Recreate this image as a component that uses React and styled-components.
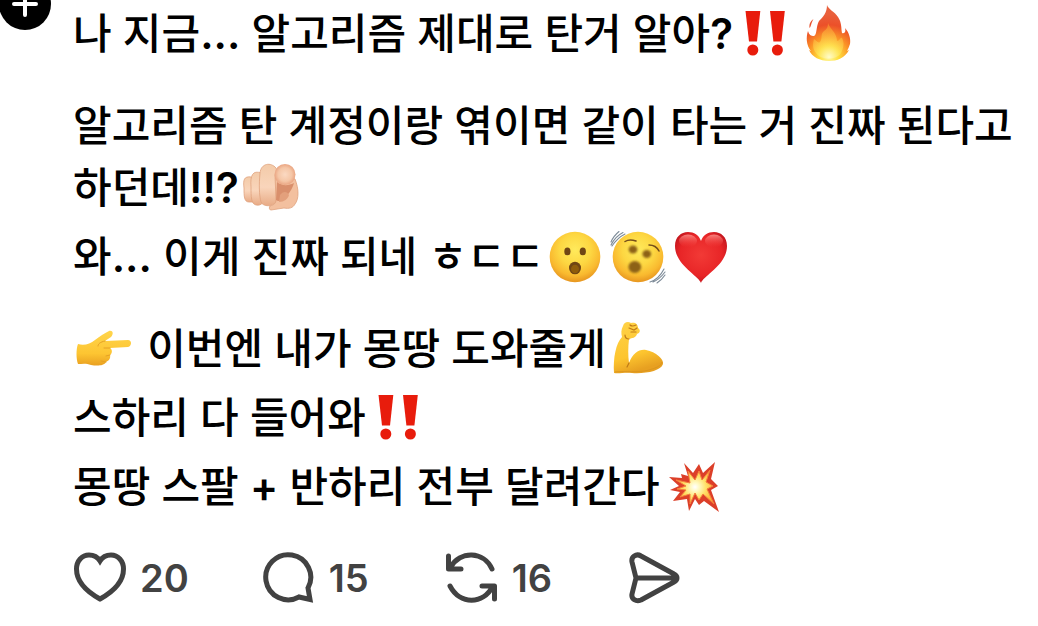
import React from "react";
import styled, { createGlobalStyle } from "styled-components";

const GlobalStyle = createGlobalStyle`
  * { box-sizing: border-box; }
  body {
    margin: 0;
    background: #fff;
    color: #000;
    overflow-x: hidden;
    font-family: Inter, "Noto Sans CJK KR", sans-serif;
  }
`;

const Post = styled.article`
  display: grid;
  grid-template-columns: 73px minmax(0, 1fr);
`;

const FollowButton = styled.button`
  display: grid;
  place-items: center;
  width: 52px;
  height: 52px;
  margin: -22px 0 0 -1px;
  padding: 0;
  border: 0;
  border-radius: 50%;
  background: #000;
  color: #fff;
`;

const Content = styled.div`
  padding: 3px 12px 20px 0;
`;

const Body = styled.div`
  display: flex;
  flex-direction: column;
  gap: 30px;
  font-size: 42px;
  line-height: 62px;
  font-weight: 500;
  word-break: keep-all;
`;

const Group = styled.div`
  display: flex;
  flex-direction: column;
  gap: 7px;
`;

const Line = styled.p`
  margin: 0;
`;

const Phrase = styled.span`
  white-space: nowrap;
`;

const Mark = styled.span`
  font-weight: 600;
`;

const Emoji = styled.svg`
  width: 63px;
  height: 62px;
  vertical-align: top;
`;

const Actions = styled.div`
  display: flex;
  align-items: center;
  gap: 74px;
  margin-top: 32px;
  padding-left: 1px;
`;

const ActionButton = styled.button`
  display: flex;
  align-items: center;
  gap: 14px;
  height: 56px;
  padding: 0;
  border: 0;
  background: none;
  color: #424242;
  font: 600 38px/56px Inter, sans-serif;
`;

const Count = styled.span`
  min-width: 43px;
  text-align: left;
`;

const ActionIcon = styled.svg`
  width: 52px;
  height: 52px;
  fill: none;
  stroke: currentColor;
  stroke-width: 5;
  stroke-linecap: round;
  stroke-linejoin: round;
`;

function DoubleBang() {
  return (
    <Emoji viewBox="0 0 63 62" role="img" aria-label="느낌표 두 개" fill="#e81c0c">
      <path d="M12.5 8H27.3L24 38.5H16Z" />
      <circle cx="19.8" cy="47" r="5.5" />
      <path d="M37 8H51.8L48.4 38.5H40.4Z" />
      <circle cx="44.4" cy="47" r="5.5" />
    </Emoji>
  );
}

function Fire() {
  return (
    <Emoji viewBox="0 0 63 62" role="img" aria-label="불">
      <defs>
        <radialGradient id="fire" gradientUnits="userSpaceOnUse" cx="33" cy="54" r="43">
          <stop offset="0" stopColor="#fff9a8" />
          <stop offset=".22" stopColor="#ffdf3d" />
          <stop offset=".48" stopColor="#fb9326" />
          <stop offset=".75" stopColor="#ec5029" />
          <stop offset="1" stopColor="#e9603c" />
        </radialGradient>
        <radialGradient id="fireCore" gradientUnits="userSpaceOnUse" cx="33" cy="54" r="30">
          <stop offset="0" stopColor="#fffde0" />
          <stop offset=".4" stopColor="#ffe85c" />
          <stop offset="1" stopColor="#fba233" />
        </radialGradient>
      </defs>
      <path d="M31 2C32 6 39 9 42 14C46 20 45 25 46 30C49 31 50 28 49 25C53 29 55 36 54 41C53 44 52 46 51 48L53 47C49 55 41 58 33 58C24 58 16 54 13 47L15 48C10 42 10 34 12 28C13 32 15 33 18 33C21 32 20 23 23 18C27 14 31 10 31 2Z" fill="url(#fire)" />
      <path d="M17.5 16C15 18 13 20 13.5 25C15 24 15 20 17.5 16Z" fill="#e9522e" />
      <path d="M32 20C34 26 41 30 41 38C44 38 44 34 46 35C49 40 47 46 45 50C41 57 25 58 20 50C16 45 17 40 18 36C20 37 22 41 24 39C27 35 24 31 28 28C31 26 32 24 32 20Z" fill="url(#fireCore)" opacity=".6" />
    </Emoji>
  );
}

function PointAtYou() {
  return (
    <Emoji viewBox="0 0 63 62" role="img" aria-label="당신을 가리키는 손">
      <defs>
        <linearGradient id="skin" x1="0" y1="0" x2="0" y2="1">
          <stop offset="0" stopColor="#f3cba9" />
          <stop offset=".55" stopColor="#f9d5bb" />
          <stop offset="1" stopColor="#e8ab86" />
        </linearGradient>
        <radialGradient id="knuckle">
          <stop offset="0" stopColor="#fbd9c2" />
          <stop offset=".65" stopColor="#f5c6a6" />
          <stop offset="1" stopColor="#eaa582" />
        </radialGradient>
      </defs>
      <g fill="url(#skin)" stroke="#dfa27d" strokeWidth=".8">
        <path d="M12 20C5 19 4 23 5 31C5 39 5 45 10 45H16V22Z" />
        <path d="M22 16C14 13 11 18 12 30C12 39 12 47 17 48C23 49 25 45 25 39V20Z" />
        <path d="M37 11C32 5 22 6 21 16C20 27 20 38 22 45C24 50 34 50 37 45L41 22Z" />
        <path d="M36 18L56 22C60 32 60 42 56 47C54 51 50 52 45 51L32 53C30 53 30 50 31 49C35 48 37 46 37 43Z" fill="#f3c09f" />
      </g>
      <path d="M38 25C43 29 49 29 55 26C53 33 50 36 46 41C43 44 39 45 37 43Z" fill="#d98f6c" />
      <path d="M41 38C44 34 48 34 50 38C49 42 45 45 40 45Z" fill="#e3a07c" />
      <circle cx="46" cy="17.5" r="10.5" fill="url(#knuckle)" />
    </Emoji>
  );
}

function FaceGradient({ id }) {
  return (
    <radialGradient id={id} cx="50%" cy="36%" r="62%">
      <stop offset="0" stopColor="#ffea5c" />
      <stop offset=".5" stopColor="#fdd742" />
      <stop offset=".82" stopColor="#f9b92f" />
      <stop offset="1" stopColor="#e99a22" />
    </radialGradient>
  );
}

function OpenMouth() {
  return (
    <Emoji viewBox="0 0 63 62" role="img" aria-label="놀란 얼굴">
      <defs><FaceGradient id="faceStill" /></defs>
      <circle cx="31" cy="31" r="25.3" fill="url(#faceStill)" />
      <g fill="#704514">
        <ellipse cx="23.4" cy="25.4" rx="3.1" ry="3.9" />
        <ellipse cx="38.8" cy="25.4" rx="3.1" ry="3.9" />
        <ellipse cx="31" cy="42" rx="6" ry="6.3" />
      </g>
      <ellipse cx="31" cy="43" rx="4" ry="4.3" fill="#8f5c0b" />
    </Emoji>
  );
}

function ShakingFace() {
  return (
    <Emoji viewBox="0 0 63 62" role="img" aria-label="흔들리는 얼굴">
      <defs>
        <FaceGradient id="faceShake" />
        <filter id="shake"><feGaussianBlur stdDeviation=".8" /></filter>
      </defs>
      <circle cx="31" cy="31" r="25.3" fill="url(#faceShake)" />
      <g fill="#8d6215" filter="url(#shake)">
        <ellipse cx="26" cy="23.5" rx="4.4" ry="4" />
        <ellipse cx="39.8" cy="28" rx="4.4" ry="4" />
        <ellipse cx="27.8" cy="41" rx="6.4" ry="6" />
      </g>
      <g fill="none" strokeLinecap="round">
        <path d="M18 15.5C21 13.5 25 13.5 29 15M42 19C46 19 50 21 52 25" stroke="#754e1a" strokeWidth="1.5" />
        <path d="M4 16C6 11 9 8 12 5.5M4 19C7 13 11 9 16 6.5M5 20C9 14 12 11 18 8M43 56C49 54 54 49 57 43M46 56C51 54 55 50 58 46M50 57C53 55 56 52 58 49" stroke="#7d8b98" strokeWidth="1.1" />
      </g>
    </Emoji>
  );
}

function RedHeart() {
  return (
    <Emoji viewBox="0 0 63 62" role="img" aria-label="빨간 하트">
      <defs>
        <radialGradient id="heart" cx="50%" cy="45%" r="58%">
          <stop offset="0" stopColor="#f23a36" />
          <stop offset=".7" stopColor="#e82527" />
          <stop offset="1" stopColor="#c2161e" />
        </radialGradient>
        <linearGradient id="shine" x1="0" y1="0" x2="0" y2="1">
          <stop offset="0" stopColor="#ff9a94" stopOpacity=".8" />
          <stop offset="1" stopColor="#f5403c" stopOpacity="0" />
        </linearGradient>
      </defs>
      <path d="M31 57C29 50 5 39 5 20C5 11 11 6 18 6C24 6 29 9 31 15C33 9 38 6 44 6C51 6 57 11 57 20C57 39 33 50 31 57Z" fill="url(#heart)" />
      <ellipse cx="18" cy="15" rx="9" ry="6.5" fill="url(#shine)" />
      <ellipse cx="44" cy="15" rx="9" ry="6.5" fill="url(#shine)" />
    </Emoji>
  );
}

function PointRight() {
  return (
    <Emoji viewBox="0 0 63 62" role="img" aria-label="오른쪽을 가리키는 손">
      <defs>
        <linearGradient id="handRight" x1="0" y1="0" x2="0" y2="1">
          <stop offset="0" stopColor="#ffd54c" />
          <stop offset=".65" stopColor="#fdc532" />
          <stop offset="1" stopColor="#e9a021" />
        </linearGradient>
      </defs>
      <path d="M5 26C11 28 17 26 22 22C27 18 32 15 36 13C40 12 41 16 38 19L32 23L55 22C59 22 59 28 55 29L37 30C40 32 39 36 37 37C38 41 35 43 33 44C31 48 24 48 18 47C13 45 9 46 5 46C3 41 3 31 5 26Z" fill="url(#handRight)" />
      <path d="M32 23C27 24 25 26 25 28M37 30H31M37 37L33 38M33 44L28 43" fill="none" stroke="#e5a024" strokeWidth="1" strokeLinecap="round" />
    </Emoji>
  );
}

function Biceps() {
  return (
    <Emoji viewBox="0 0 63 62" role="img" aria-label="알통">
      <defs>
        <linearGradient id="arm" x1="0" y1="0" x2=".3" y2="1">
          <stop offset="0" stopColor="#ffd348" />
          <stop offset=".7" stopColor="#fdc52f" />
          <stop offset="1" stopColor="#e7a021" />
        </linearGradient>
      </defs>
      <path d="M17 8C18 4 22 3 25 5C29 4 32 6 32 10C35 12 34 15 31 16C30 20 26 20 23 21C22 29 22 38 23 45C27 35 33 31 40 32C50 34 58 41 57 46C55 53 39 56 26 55C19 54 13 56 8 55C7 40 10 25 16 19C15 15 15 12 17 8Z" fill="url(#arm)" />
      <path d="M23 45L21 49M23 21C20 21 19 19 19 17M24 7C26 9 28 8 30 7M23 10L28 12L31 10M25 14L30 14" fill="none" stroke="#bf7a17" strokeWidth="1.2" strokeLinecap="round" />
      <path d="M9 54C19 53 32 55 43 52C50 50 55 48 56 44" fill="none" stroke="#dc951e" strokeWidth="1" />
    </Emoji>
  );
}

function Boom() {
  return (
    <Emoji viewBox="0 0 63 62" role="img" aria-label="폭발">
      <defs>
        <radialGradient id="boom" gradientUnits="userSpaceOnUse" cx="35" cy="31" r="20">
          <stop offset="0" stopColor="#fff" />
          <stop offset=".22" stopColor="#fff9c2" />
          <stop offset=".55" stopColor="#ffe169" />
          <stop offset="1" stopColor="#fcae34" />
        </radialGradient>
      </defs>
      <path d="M24 7L33 17L39 8L43 17L55 6L51 23L58 30L51 34L59 56L44 45L39 49L35 43L29 55L27 43L13 45L20 36L10 34L19 30L9 21L22 22L21 18L28 20Z" fill="#dc3f29" />
      <path d="M28 15L35 24L39 15L42 24L50 14L46 26L53 30L47 33L54 48L43 38L39 44L35 37L30 48L30 38L20 41L26 34L17 33L26 30L16 24L30 27Z" fill="url(#boom)" stroke="#f5803c" strokeWidth="1" />
    </Emoji>
  );
}

export default function App() {
  return (
    <>
      <GlobalStyle />
      <Post>
        <div>
          <FollowButton aria-label="팔로우">
            <svg width="28" height="28" viewBox="0 0 28 28" fill="none" stroke="currentColor" strokeWidth="4" strokeLinecap="round">
              <path d="M14 3V25M3 14H25" />
            </svg>
          </FollowButton>
        </div>
        <Content>
          <Body>
            <Line>나 지금<Mark>...</Mark> 알고리즘 제대로 탄거 알아<Mark>?</Mark><DoubleBang /><Fire /></Line>
            <Group>
              <Line>알고리즘 탄 계정이랑 엮이면 같이 타는 거 진짜 된다고 <Phrase>하던데<Mark>!!?</Mark></Phrase><PointAtYou /></Line>
              <Line>와<Mark>...</Mark> 이게 진짜 되네 ㅎㄷㄷ<OpenMouth /><ShakingFace /><RedHeart /></Line>
            </Group>
            <Group>
              <Line><PointRight /> 이번엔 내가 몽땅 도와줄게<Biceps /></Line>
              <Line>스하리 다 들어와<DoubleBang /></Line>
              <Line>몽땅 스팔 <Mark>+</Mark> 반하리 전부 달려간다<Boom /></Line>
            </Group>
          </Body>
          <Actions>
            <ActionButton aria-label="좋아요 20">
              <ActionIcon viewBox="0 0 52 52">
                <path strokeLinejoin="miter" d="M26 9C23 4 19 3 15 3C8 3 2.5 9 2.5 17C2.5 33 17 42 26 47C35 42 49.5 33 49.5 17C49.5 9 44 3 37 3C33 3 29 4 26 9Z" />
              </ActionIcon>
              <Count>20</Count>
            </ActionButton>
            <ActionButton aria-label="댓글 15">
              <ActionIcon viewBox="0 0 52 52">
                <path strokeLinejoin="miter" d="M45 36A22.500 22.500 0 1 0 36 45L47 47.5Z" />
              </ActionIcon>
              <Count>15</Count>
            </ActionButton>
            <ActionButton aria-label="리포스트 16">
              <ActionIcon viewBox="0 0 52 52">
                <path d="M46 17C38 -1 14 -2 4 16M2.5 4V17H15M4 34C14 53 37 53 47 34M36 34H48.5V47" />
              </ActionIcon>
              <Count>16</Count>
            </ActionButton>
            <ActionButton aria-label="공유">
              <ActionIcon viewBox="0 0 52 52">
                <path d="M12 4L45 22C49 24 49 28 45 30L12 48C7 50 2 47 3 42L7 26L3 10C2 5 7 1 12 4ZM7 26H47" />
              </ActionIcon>
            </ActionButton>
          </Actions>
        </Content>
      </Post>
    </>
  );
}
